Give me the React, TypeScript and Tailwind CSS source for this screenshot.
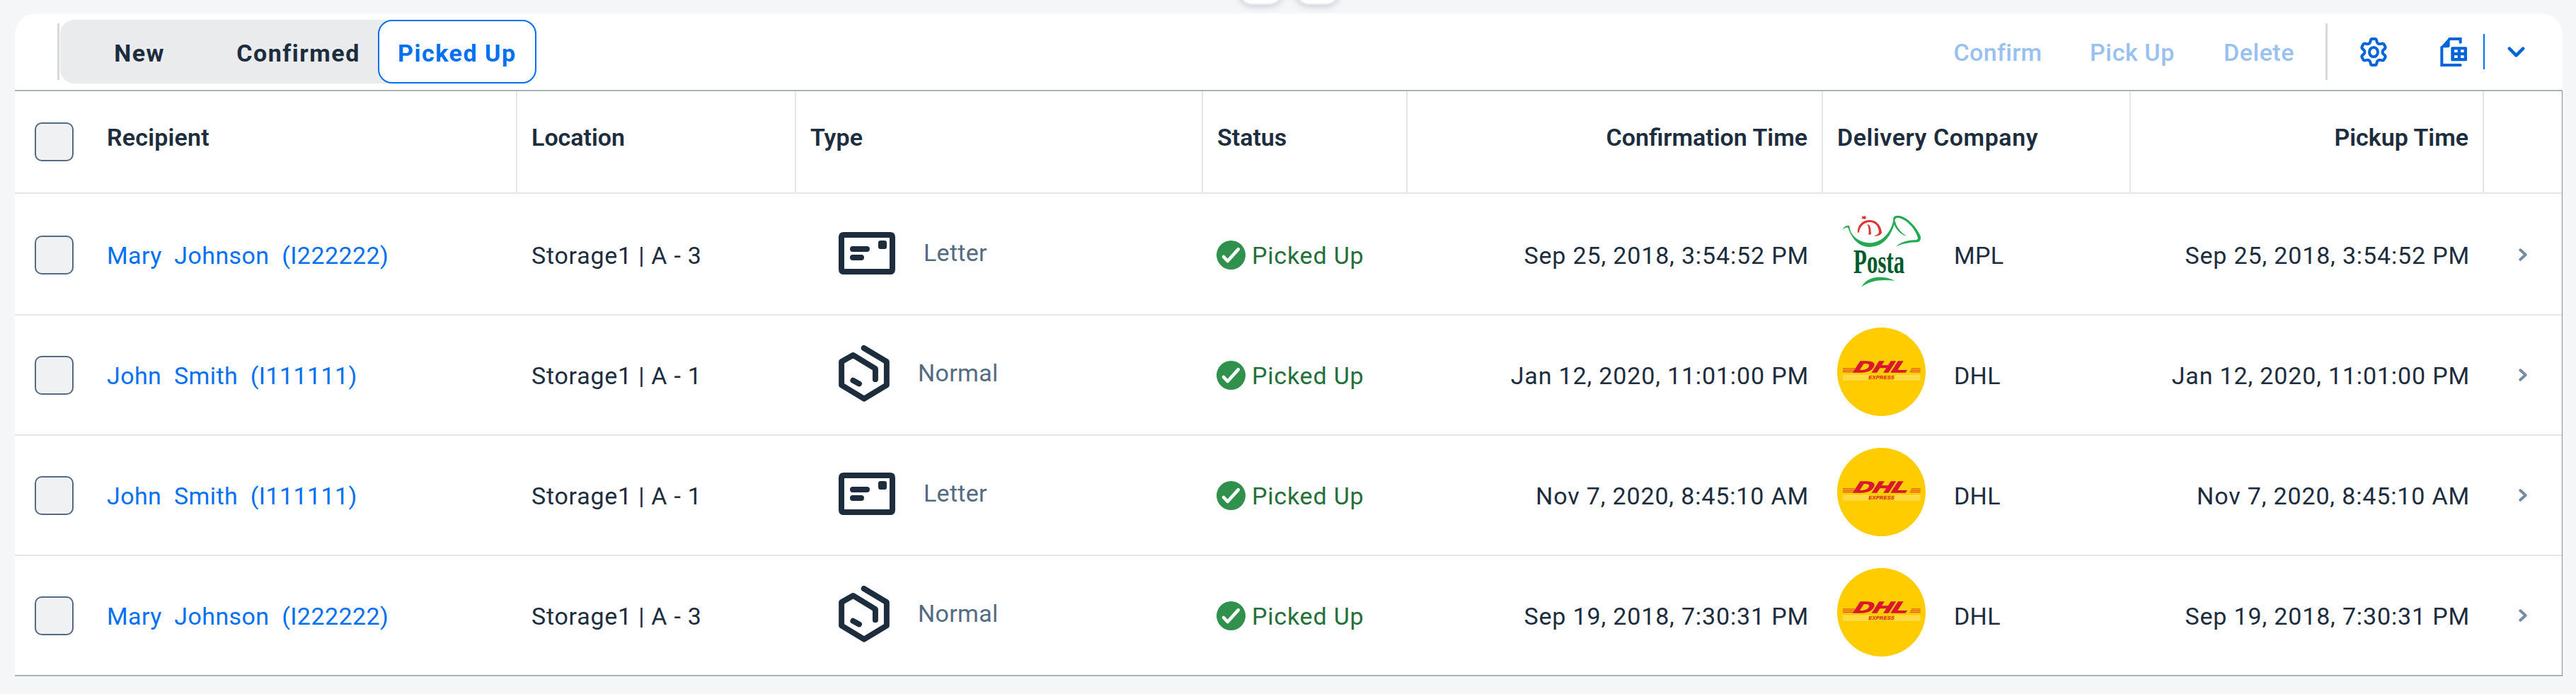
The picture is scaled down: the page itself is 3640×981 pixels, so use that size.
type TypeKind = "Letter" | "Normal";

interface Delivery {
  recipient: string;
  location: string;
  kind: TypeKind;
  time: string;
  company: "MPL" | "DHL";
}

const deliveries: Delivery[] = [
  { recipient: "Mary  Johnson  (I222222)", location: "Storage1 | A - 3", kind: "Letter", time: "Sep 25, 2018, 3:54:52 PM", company: "MPL" },
  { recipient: "John  Smith  (I111111)", location: "Storage1 | A - 1", kind: "Normal", time: "Jan 12, 2020, 11:01:00 PM", company: "DHL" },
  { recipient: "John  Smith  (I111111)", location: "Storage1 | A - 1", kind: "Letter", time: "Nov 7, 2020, 8:45:10 AM", company: "DHL" },
  { recipient: "Mary  Johnson  (I222222)", location: "Storage1 | A - 3", kind: "Normal", time: "Sep 19, 2018, 7:30:31 PM", company: "DHL" },
];

const columns =
  "grid grid-cols-[112px_598px_394px_575px_289px_587px_435px_499px_111px]";

function GearIcon() {
  return (
    <svg className="h-[41px] w-[38px]" viewBox="0 0 113 123" fill="none" stroke="#0064d9" strokeWidth="12">
      <path d="M50 6H63C69 6 69 10 70 17C72 26 80 30 88 27C96 24 99 26 102 32L105 37C108 43 106 47 101 50C92 56 92 67 101 73C106 76 108 80 105 86L102 91C99 97 96 99 88 96C80 93 72 97 70 106C69 113 69 117 63 117H50C44 117 44 113 43 106C41 97 33 93 25 96C17 99 14 97 11 91L8 86C5 80 7 76 12 73C21 67 21 56 12 50C7 47 5 43 8 37L11 32C14 26 17 24 25 27C33 30 41 26 43 17C44 10 44 6 50 6Z" />
      <ellipse cx="56.5" cy="62" rx="18" ry="20" />
    </svg>
  );
}

function SpreadsheetIcon() {
  return (
    <svg className="h-[41px] w-[38px]" viewBox="0 0 114 123" fill="none">
      <path d="M7 42V117H86M40 6H86V20" stroke="#0064d9" strokeWidth="12" strokeLinecap="round" />
      <path d="M1 42L36 3Q41 -1 41 8V34Q41 43 32 43H8Z" fill="#0064d9" />
      <rect x="46" y="40" width="68" height="60" rx="5" fill="#0064d9" />
      <path d="M60 52H74V63H60ZM87 52H101V63H87ZM60 76H74V87H60ZM87 76H101V87H87Z" fill="#fff" />
    </svg>
  );
}

function LetterIcon() {
  return (
    <svg className="mb-1 h-[60px] w-[80px]" viewBox="0 0 240 180" fill="none" stroke="#1d2d3e" strokeWidth="24" strokeLinecap="round">
      <path d="M22 0H218Q240 0 240 22V158Q240 180 218 180H22Q0 180 0 158V22Q0 0 22 0ZM24 24V156H216V24Z" fill="#1d2d3e" fillRule="evenodd" stroke="none" />
      <path d="M60 72H120M60 108H96" />
      <rect x="168" y="36" width="36" height="36" rx="10" fill="#1d2d3e" stroke="none" />
    </svg>
  );
}

function ParcelIcon() {
  return (
    <svg className="mb-1 h-[80px] w-[72px]" viewBox="0 0 216 241" fill="none" stroke="#1d2d3e" strokeWidth="24" strokeLinecap="round" strokeLinejoin="round">
      <path d="M107 12L204 70V170L108 228L12 170V70L61 42L156 100V145M61 150L87 164" />
    </svg>
  );
}

function PickedIcon() {
  return (
    <svg className="h-[41px] w-[41px]" viewBox="0 0 123 123" fill="none">
      <circle cx="61.5" cy="61.5" r="61.5" fill="#30914c" />
      <path d="M30 69L47 87L92 37" stroke="#fff" strokeWidth="14" strokeLinecap="round" strokeLinejoin="round" />
    </svg>
  );
}

function PostaLogo() {
  return (
    <svg className="mb-[9px] h-[125px] w-[125px] overflow-visible" viewBox="168 39 375 375">
      <g fill="#24a951">
        <path d="M191 136C196 121 206 115 220 118C222 160 262 190 306 190C360 188 396 145 406 95C404 78 412 74 430 75C460 78 500 115 521 160C524 175 520 186 508 187C470 188 440 195 418 206C436 186 465 180 495 178C510 178 512 172 508 162C495 125 460 88 425 83C413 83 411 95 412 105C395 165 360 207 306 207C255 207 228 165 214 125C204 123 197 128 191 136Z" />
        <path d="M413 96C420 125 438 145 461 161C437 155 412 128 408 104Z" />
        <path d="M271 377C288 345 320 334 352 335C378 336 398 343 413 350C385 347 360 347 335 350C308 355 288 364 271 377Z" />
      </g>
      <g fill="#dc3230">
        <path d="M255 147C252 120 272 93 306 93C336 93 356 120 357 147C352 158 340 162 324 161C336 157 344 152 345 145C345 122 330 102 306 102C280 102 264 122 261 145Z" />
        <path d="M296 112C304 112 309 120 310 132L312 154L301 155C303 140 303 125 296 112Z" />
        <path d="M273 76L281 78L289 75L288 81L294 84L287 86L286 91L279 87L271 88L275 82Z" />
      </g>
      <text x="237" y="317" fontFamily="Liberation Serif, serif" fontWeight="700" fontSize="144" textLength="217" lengthAdjust="spacingAndGlyphs" fill="#005a2b">
        Posta
      </text>
    </svg>
  );
}

function DhlLogo() {
  return (
    <svg className="mb-[9px] h-[125px] w-[125px] overflow-visible" viewBox="168 548 375 375">
      <circle cx="355.5" cy="735.5" r="187.5" fill="#ffcc00" />
      <g stroke="#d9182d" strokeWidth="2.6">
        <path d="M192 722H243M192 729H240M192 736H237M482 722H521M479 729H521M476 736H521" />
      </g>
      <g stroke="#fff0a8" strokeWidth="2.4">
        <path d="M192 751H308M192 757H305M192 763H302M192 769H300M413 751H521M411 757H521M409 763H521M407 769H521" />
      </g>
      <g transform="translate(236 737) skewX(-18)">
        <text x="0" y="0" fontFamily="Liberation Sans, sans-serif" fontWeight="700" fontStyle="italic" fontSize="66" textLength="229" lengthAdjust="spacingAndGlyphs" fill="#d9182d" stroke="#d9182d" strokeWidth="4">
          DHL
        </text>
      </g>
      <text x="301" y="768" fontFamily="Liberation Sans, sans-serif" fontWeight="700" fontStyle="italic" fontSize="23" textLength="110" lengthAdjust="spacingAndGlyphs" fill="#d9182d">
        EXPRESS
      </text>
    </svg>
  );
}

function Checkbox() {
  return <span className="ml-7 block size-[55px] rounded-[10px] border-2 border-[#556b82] bg-[#eff1f2]" />;
}

function Toolbar() {
  return (
    <div className="flex h-[110px] items-start rounded-t-[30px] border-b-2 border-[#a8b3bd] bg-white pr-[53px]">
      <span className="mt-3.5 ml-[60px] h-20 w-[3px] bg-[#d9d9d9]" />
      <div className="mt-[9px] ml-px grid h-[90px] w-[673px] grid-cols-3 rounded-[20px] bg-[#eaebec] font-bold">
        <button className="pt-1 tracking-[1.5px]">New</button>
        <button className="pt-1 tracking-[1.5px]">Confirmed</button>
        <button className="rounded-[20px] border-2 border-[#0070f2] bg-white pt-1 tracking-[1.5px] text-[#0070f2]">Picked Up</button>
      </div>
      <div className="mt-[10px] ml-auto flex h-[88px] items-center font-medium text-[#99c1f0]">
        <button className="w-[190px] pt-0.5 tracking-[0.3px]">Confirm</button>
        <button className="w-[190px] pt-0.5 tracking-[0.6px]">Pick Up</button>
        <button className="w-[168px] pt-0.5 tracking-[0.5px]">Delete</button>
        <span className="ml-2.5 h-20 w-[3px] bg-[#d9d9d9]" />
        <button className="ml-[46px]"><GearIcon /></button>
        <button className="ml-[75px]"><SpreadsheetIcon /></button>
        <span className="ml-[23px] h-[50px] w-0.5 bg-[#0070f2]" />
        <button className="ml-8">
          <svg className="h-[15px] w-[25px]" viewBox="0 0 75 46" fill="none" stroke="#0064d9" strokeWidth="14" strokeLinecap="round" strokeLinejoin="round">
            <path d="M8 8L37.5 38L67 8" />
          </svg>
        </button>
      </div>
    </div>
  );
}

function TableHeader() {
  return (
    <div className={`${columns} h-[145px] border-b-2 border-[#e5e5e5] font-semibold`}>
      <div className="pt-11"><Checkbox /></div>
      <div className="border-r-2 border-[#e5e5e5] pt-[45px] pl-[18px] tracking-[0.2px]">Recipient</div>
      <div className="border-r-2 border-[#e5e5e5] pt-[45px] pl-5">Location</div>
      <div className="border-r-2 border-[#e5e5e5] pt-[45px] pl-5">Type</div>
      <div className="border-r-2 border-[#e5e5e5] pt-[45px] pl-5">Status</div>
      <div className="border-r-2 border-[#e5e5e5] pt-[45px] pr-5 text-right">Confirmation Time</div>
      <div className="border-r-2 border-[#e5e5e5] pt-[45px] pl-5 tracking-[0.55px]">Delivery Company</div>
      <div className="border-r-2 border-[#e5e5e5] pt-[45px] pr-5 text-right">Pickup Time</div>
      <div />
    </div>
  );
}

function Row({ item }: { item: Delivery }) {
  return (
    <div className={`${columns} h-[170px] items-center border-b-2 border-[#e5e5e5] last:border-[#a8b3bd]`}>
      <Checkbox />
      <a className="pt-px pl-[18px] tracking-[0.4px] text-[#0070f2]">{item.recipient}</a>
      <div className="pt-px pl-5 tracking-[0.75px]">{item.location}</div>
      {item.kind === "Letter" ? (
        <div className="flex items-center gap-10 pl-[60px] text-[#556b82]">
          <LetterIcon />
          <span className="mb-1.5 tracking-[0.3px]">Letter</span>
        </div>
      ) : (
        <div className="flex items-center gap-10 pl-[60px] text-[#556b82]">
          <ParcelIcon />
          <span className="mb-1.5 tracking-[0.3px]">Normal</span>
        </div>
      )}
      <div className="flex items-center gap-[9px] pl-[19px] tracking-[0.8px] text-[#256f3a]">
        <PickedIcon />
        <span className="pt-px">Picked Up</span>
      </div>
      <div className="pt-px pr-5 text-right tracking-[0.85px]">{item.time}</div>
      <div className="flex items-center gap-10 pl-5 tracking-[0.3px]">
        {item.company === "MPL" ? <PostaLogo /> : <DhlLogo />}
        <span className="pt-px">{item.company}</span>
      </div>
      <div className="pt-px pr-5 text-right tracking-[0.85px]">{item.time}</div>
      <svg className="ml-[49px] h-[18px] w-3" viewBox="0 0 36 54" fill="none" stroke="#758ca4" strokeWidth="12" strokeLinecap="round" strokeLinejoin="round">
        <path d="M7 7L29 27L7 47" />
      </svg>
    </div>
  );
}

export default function App() {
  return (
    <div className="relative h-[981px] w-[3640px] overflow-hidden bg-[#f5f6f7] pt-[19px] pr-[19px] pl-[21px] font-['Roboto',sans-serif] text-[34px] leading-[40px] whitespace-pre text-[#1d2d3e]">
      <Toolbar />
      <div className="border-r border-[#8c8c8c] bg-white">
        <TableHeader />
        <div className="pt-0.5">
          {deliveries.map((item, index) => (
            <Row key={index} item={item} />
          ))}
        </div>
      </div>
      <div className="absolute -top-14 left-[1750px] flex gap-[17px]">
        <span className="size-[63px] rounded-[20px] border-2 border-[#e8eaed] bg-white shadow-[0_2px_10px_rgba(85,107,130,0.3)]" />
        <span className="size-[63px] rounded-[20px] border-2 border-[#e8eaed] bg-white shadow-[0_2px_10px_rgba(85,107,130,0.3)]" />
      </div>
    </div>
  );
}
